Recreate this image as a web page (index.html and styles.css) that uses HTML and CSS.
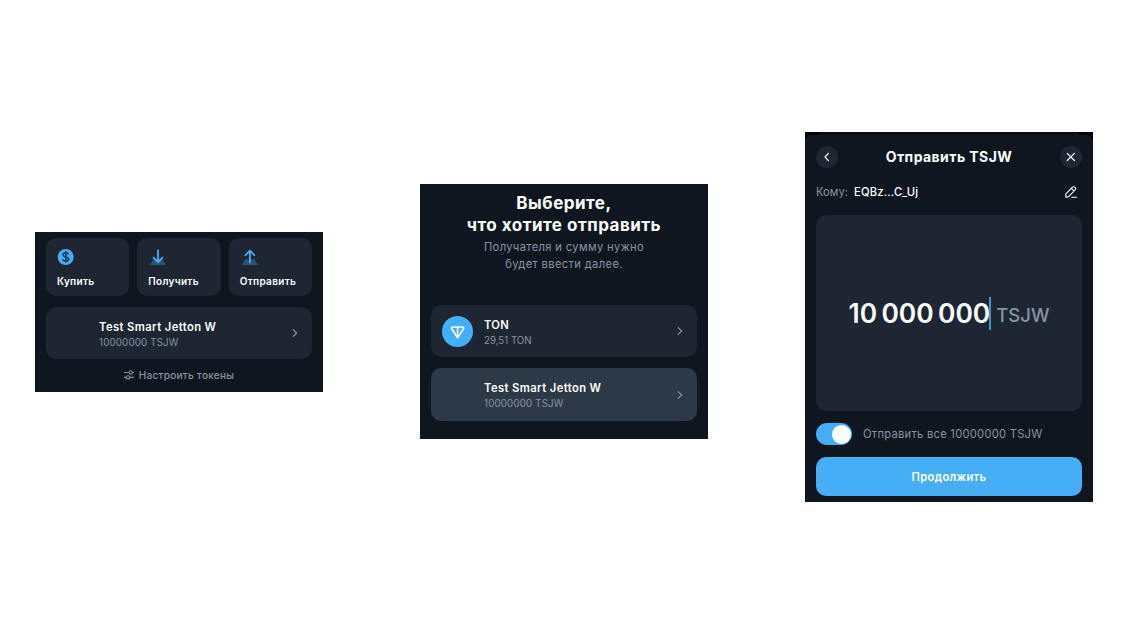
FILE: index.html
```html
<!DOCTYPE html>
<html lang="ru">
<head>
<meta charset="utf-8">
<title>TON Wallet</title>
<link rel="stylesheet" href="styles.css">
</head>
<body>
<main class="stage">
  <section class="panel wallet">
    <div class="actions">
      <div class="action">
        <svg class="action-icon" viewBox="0 0 18 18"><circle cx="8.7" cy="9" r="8" fill="#45aef5"/><path d="M11.6 6.5C11.2 5.3 10.2 4.9 8.8 4.9 7.1 4.9 6 5.6 6 6.8c0 3 5.7 1.3 5.7 4.3 0 1.2-1.1 2-2.8 2-1.6 0-2.8-.6-3.1-1.9M8.8 3.2v11.6" fill="none" stroke="#1d3b56" stroke-width="1.6"/></svg>
        <span class="t-buy">Купить</span>
      </div>
      <div class="action">
        <svg class="action-icon" viewBox="0 0 18 18"><path d="M5.2 11.2h9.2L18 17H1.9z" fill="#285477"/><path d="M10 2.5v11M5.6 9.7l4.4 4.4 4.4-4.4" fill="none" stroke="#45aef5" stroke-width="1.8" stroke-linecap="round" stroke-linejoin="round"/></svg>
        <span class="t-receive">Получить</span>
      </div>
      <div class="action">
        <svg class="action-icon" viewBox="0 0 18 18"><path d="M5.2 11.2h9.2L18 17H1.6z" fill="#285477"/><path d="M9.9 14.4V3M5.5 7.1l4.4-4.4 4.4 4.4" fill="none" stroke="#45aef5" stroke-width="1.8" stroke-linecap="round" stroke-linejoin="round"/></svg>
        <span class="t-send">Отправить</span>
      </div>
    </div>
    <div class="token">
      <div class="token-icon"></div>
      <div class="token-text"><b class="t-jetton">Test Smart Jetton W</b><span class="t-amount">10000000 TSJW</span></div>
      <svg class="chevron" viewBox="0 0 6 10"><path d="M1.2 1.6L4.6 5 1.2 8.4"/></svg>
    </div>
    <div class="manage">
      <svg class="sliders" viewBox="0 0 10 10"><path d="M0 2.5h4.8M8.6 2.5H10M0 7.4h2.1M5.9 7.4H10"/><circle cx="6.7" cy="2.5" r="1.7"/><circle cx="4" cy="7.4" r="1.7"/></svg>
      <span class="t-manage">Настроить токены</span>
    </div>
  </section>

  <section class="panel picker">
    <h1><span class="t-choose">Выберите,</span><br><span class="t-what">что хотите отправить</span></h1>
    <p><span class="t-hint1">Получателя и сумму нужно</span><br><span class="t-hint2">будет ввести далее.</span></p>
    <div class="token">
      <div class="token-icon ton"><svg viewBox="0 0 32 32"><path d="M11 11.3h10.2c1 0 1.5 1 1 1.9L16.1 22.4 10 13.2c-.5-.9 0-1.9 1-1.9zM16.1 11.5v10.5" fill="none" stroke="#fff" stroke-width="1.6" stroke-linejoin="round"/></svg></div>
      <div class="token-text"><b class="t-ton">TON</b><span class="t-tonamount">29,51 TON</span></div>
      <svg class="chevron" viewBox="0 0 6 10"><path d="M1.2 1.6L4.6 5 1.2 8.4"/></svg>
    </div>
    <div class="token selected">
      <div class="token-icon"></div>
      <div class="token-text"><b class="t-jetton">Test Smart Jetton W</b><span class="t-amount">10000000 TSJW</span></div>
      <svg class="chevron" viewBox="0 0 6 10"><path d="M1.2 1.6L4.6 5 1.2 8.4"/></svg>
    </div>
  </section>

  <section class="panel transfer">
    <div class="sheet">
      <header>
        <div class="round"><svg viewBox="0 0 22 22"><path d="M12.4 7.4L9 11l3.4 3.6"/></svg></div>
        <h2 class="t-title">Отправить TSJW</h2>
        <div class="round"><svg viewBox="0 0 22 22"><path d="M7.2 7.3l7.2 7.2M14.4 7.3l-7.2 7.2"/></svg></div>
      </header>
      <div class="recipient">
        <span class="t-to">Кому:</span><span class="t-address">EQBz...C_Uj</span>
        <svg class="pencil" viewBox="0 0 14 14"><path d="M2.2 8.7L8.5 2.2a1.6 1.6 0 012.3 0l.4.4a1.6 1.6 0 010 2.3L4.8 11.3c-.6.6-3 .9-3 .9s-.2-2.9.4-3.5zM7.4 3.4L10 6M7.9 12.2h4.6"/></svg>
      </div>
      <div class="amount"><span class="t-number">10&#8201;000&#8201;000</span><i class="caret"></i><span class="t-unit">TSJW</span></div>
      <div class="all"><div class="switch"><div class="knob"></div></div><span class="t-all">Отправить все 10000000 TSJW</span></div>
      <div class="button"><span class="t-button">Продолжить</span></div>
    </div>
  </section>
</main>
</body>
</html>
```
FILE: styles.css
```css
* { box-sizing: border-box; }
body { margin: 0; background: #fff; font-family: Inter, "Noto Sans", sans-serif; font-size: 10px; color: #fff; }
.stage { width: 1128px; height: 634px; padding: 0 35px; display: flex; justify-content: space-between; align-items: flex-start; }
.panel { width: 288px; background: #10161f; white-space: nowrap; }
svg { display: block; flex: none; }

.wallet { height: 160px; margin-top: 232px; padding: 6px 11px 0; }
.actions { display: flex; gap: 8px; }
.action { flex: 1; height: 58px; border-radius: 10px; background: #1e2533; padding: 10px 11px 0; font-weight: 600; line-height: 14px; }
.action-icon { width: 18px; height: 18px; margin-bottom: 8px; }
.t-buy { letter-spacing: .3px; }
.t-receive { letter-spacing: .3px; }
.t-send { letter-spacing: .33px; }
.token { height: 52px; margin-top: 11px; padding: 0 14px 0 11px; border-radius: 10px; background: #1e2533; display: flex; align-items: center; }
.token-icon { width: 31px; height: 31px; margin-right: 11px; border-radius: 50%; flex: none; }
.ton { background: #45aef5; }
.ton svg { width: 31px; height: 31px; }
.token-text { flex: 1; display: flex; flex-direction: column; padding-top: 1px; }
.token-text b { font-size: 11.2px; font-weight: 600; line-height: 16px; }
.token-text span { font-size: 9.7px; line-height: 15px; color: #8994a3; }
.token-text .t-jetton { letter-spacing: .41px; }
.token-text .t-ton { letter-spacing: .3px; }
.token-text .t-amount { letter-spacing: .2px; }
.chevron { width: 6px; height: 10px; fill: none; stroke: #8994a3; stroke-width: 1.2; stroke-linecap: round; stroke-linejoin: round; }
.wallet .token-text { padding-top: 2px; }
.manage { margin-top: 9px; height: 14px; display: flex; justify-content: center; align-items: center; gap: 5px; color: #8994a3; font-weight: 500; line-height: 14px; }
.t-manage { letter-spacing: .29px; }
.sliders { width: 10px; height: 10px; fill: none; stroke: #8994a3; stroke-width: 1.1; }

.picker { height: 255px; margin-top: 184px; padding: 8px 11px 0; text-align: center; }
h1 { margin: 0; font-size: 17px; line-height: 22px; font-weight: 700; letter-spacing: .5px; }
p { margin: 3px 0 0; font-size: 11.2px; line-height: 17px; color: #8994a3; letter-spacing: .35px; }
.picker .token { height: 52px; text-align: left; }
.picker .token-text { padding-top: 2px; }
.picker p + .token { margin-top: 32px; }
.picker .selected { height: 53px; background: #2e3947; }

.transfer { height: 370px; margin-top: 132px; background: linear-gradient(90deg, #000 14px, #0c1119 14px, #0c1119 274px, #000 274px); padding-top: 3px; }
.sheet { height: 367px; border-radius: 7px 7px 0 0; background: #10161f; padding: 11px 11px 0; }
header { height: 22px; display: flex; align-items: center; justify-content: space-between; }
.round { width: 22px; height: 22px; border-radius: 50%; background: #1e2533; }
.round svg { width: 22px; height: 22px; fill: none; stroke: #fff; stroke-width: 1.2; stroke-linecap: round; stroke-linejoin: round; }
h2 { margin: 0; font-size: 14px; line-height: 20px; font-weight: 700; letter-spacing: .43px; }
.recipient { height: 16px; margin-top: 16px; display: flex; align-items: center; font-size: 11.2px; line-height: 16px; }
.t-to { width: 38px; color: #8994a3; }
.t-address { font-weight: 500; letter-spacing: .18px; }
.pencil { width: 14px; height: 14px; margin-left: auto; margin-right: 4px; fill: none; stroke: #fff; stroke-width: 1.1; stroke-linejoin: round; stroke-linecap: round; }
.amount { height: 196px; margin-top: 15px; border-radius: 10px; background: #1e2533; display: flex; align-items: center; justify-content: center; }
.t-number { font-size: 26.4px; line-height: 34px; font-weight: 600; }
.caret { width: 1.5px; height: 33px; margin-left: -1px; background: #3c94d1; }
.t-unit { margin-left: 5.5px; padding-top: 4px; font-size: 18.5px; line-height: 24px; font-weight: 500; color: #8994a3; }
.all { height: 22px; margin-top: 12px; display: flex; align-items: center; gap: 11px; font-size: 11.2px; color: #8994a3; letter-spacing: .25px; }
.switch { width: 36px; height: 22px; padding: 1.5px; border-radius: 11px; background: #45aef5; display: flex; justify-content: flex-end; }
.knob { width: 19px; height: 19px; border-radius: 50%; background: #fff; }
.button { height: 39px; margin-top: 12px; border-radius: 10px; background: #45aef5; display: flex; align-items: center; justify-content: center; font-size: 11.2px; font-weight: 600; letter-spacing: .35px; }
```
